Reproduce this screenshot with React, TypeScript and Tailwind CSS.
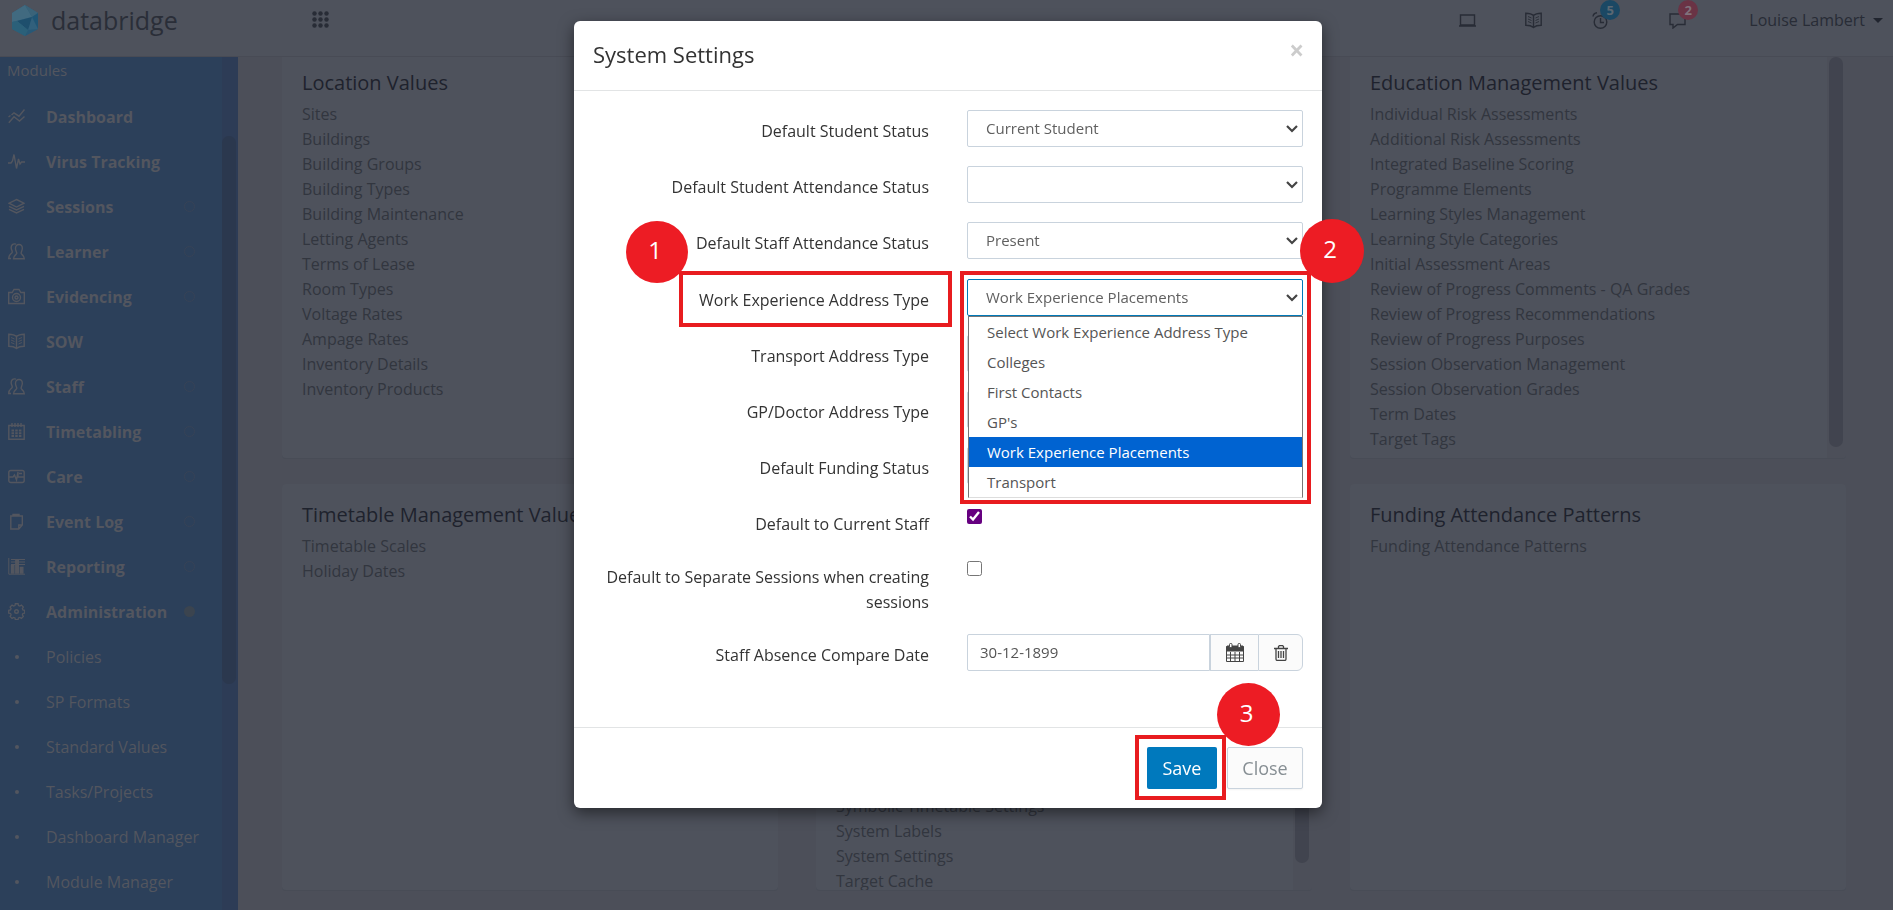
import { useState } from "react";
import type { ReactNode } from "react";

const stroke = { fill: "none", stroke: "currentColor", strokeWidth: 1.4 };

function Icon({ children, size = 17 }: { children: ReactNode; size?: number }) {
  return (
    <svg width={size} height={size} viewBox="0 0 17 17" className="shrink-0" aria-hidden="true" {...stroke}>
      {children}
    </svg>
  );
}

const icons = {
  chart: (
    <Icon>
      <path d="M.8 14.800 6 8.800l5.500 4.200L16.500 8.500M.5 9l2-1.500M3.500 7 6 4.800l5 3.400L16.500 1.500" />
    </Icon>
  ),
  pulse: (
    <Icon>
      <path d="M0 10h3l1.500-2L6 1.500 8.500 15.500 10.500 6l1.500 5 1.500-2H17" />
    </Icon>
  ),
  layers: (
    <Icon>
      <path d="M8.500 1.500 16 5.200 8.500 9 1 5.200zM1 8.300 8.500 12 16 8.300M1 11.300 8.500 15 16 11.300" />
    </Icon>
  ),
  users: (
    <Icon>
      <path d="M11 1.500c2.300 0 3.500 1.700 3.300 4.200-.2 2-1.200 3.600-1.200 4.600 0 1.200 3.200 2 3.200 5.500H5.500c0-3.500 3.300-4.300 3.300-5.500 0-1-1.200-2.600-1.300-4.600C7.400 3.200 8.700 1.500 11 1.500zM8 1.200C5 .2 3 2 3.200 5c.1 2 1.300 3 1 4.300C3.900 10.600.700 11 .7 15.500H3" />
    </Icon>
  ),
  camera: (
    <Icon>
      <path d="M.7 4.500h3.500l1.800-3h5l1.800 3h3.500v11H.7z" />
      <circle cx="8.500" cy="9.500" r="4" />
      <circle cx="8.500" cy="9.500" r="1.500" />
    </Icon>
  ),
  book: (
    <Icon>
      <path d="M8.500 3.500C6.500 1.500 3.500 1.200.8 1.200v12c3 0 5.700.5 7.700 2.300 2-1.800 4.700-2.300 7.700-2.300v-12c-2.700 0-5.700.3-7.700 2.300zv12" />
      <path d="M3 4.500l3.500 1.500M3 7l3.500 1.500M3 9.500 6.500 11M14 4.500 10.500 6M14 7l-3.500 1.500M14 9.500 10.500 11" strokeWidth=".9" />
    </Icon>
  ),
  calendar: (
    <Icon>
      <path d="M.8 2.500h15.400v13.700H.8zM4 0v4M7 0v4M10 0v4M13 0v4" />
      <path d="M3.500 7.500h10M3.500 10.200h10M3.500 13h10" strokeWidth="1.900" strokeDasharray="2.500 1.200" />
    </Icon>
  ),
  care: (
    <Icon>
      <rect x=".8" y="2.500" width="15.400" height="12" rx="2" />
      <path d="M1 9h4l1.500-2 2 5 1.500-8v5h6M11 5.500h3" />
    </Icon>
  ),
  clipboard: (
    <Icon>
      <path d="M2.800 3h11.500v9l-3.500 4h-8zM10.800 16v-4h3.500M5 3V1.500h6V3z" />
    </Icon>
  ),
  report: (
    <Icon>
      <path d="M.8 0v16.200H17M3 1.500h14M3 4h14M3 6.500h14" strokeWidth="1" />
      <path d="M3.500 15V7.500h2.300V15zM7.800 15V2.500h2.500V15zM12.300 15V9.500h2.500V15z" fill="currentColor" />
    </Icon>
  ),
  gear: (
    <Icon>
      <path d="M7 .8h3l.4 2 1.500.6 1.700-1.100 2.100 2.100-1.100 1.700.6 1.500 2 .4v3l-2 .4-.6 1.500 1.100 1.700-2.100 2.100-1.700-1.100-1.500.6-.4 2H7l-.4-2-1.500-.6-1.700 1.100-2.100-2.100 1.100-1.700-.6-1.500-2-.4V8l2-.4.6-1.500L1.300 4.400l2.100-2.100 1.700 1.100 1.500-.6z" transform="translate(.9 0) scale(.92)" />
      <circle cx="8.500" cy="8.500" r="1.800" />
    </Icon>
  ),
};

const modules = [
  { label: "Dashboard", icon: icons.chart, ring: false },
  { label: "Virus Tracking", icon: icons.pulse, ring: false },
  { label: "Sessions", icon: icons.layers, ring: true },
  { label: "Learner", icon: icons.users, ring: true },
  { label: "Evidencing", icon: icons.camera, ring: true },
  { label: "SOW", icon: icons.book, ring: false },
  { label: "Staff", icon: icons.users, ring: true },
  { label: "Timetabling", icon: icons.calendar, ring: true },
  { label: "Care", icon: icons.care, ring: true },
  { label: "Event Log", icon: icons.clipboard, ring: true },
  { label: "Reporting", icon: icons.report, ring: true },
];

const adminPages = ["Policies", "SP Formats", "Standard Values", "Tasks/Projects", "Dashboard Manager", "Module Manager"];

const locationValues = [
  "Sites",
  "Buildings",
  "Building Groups",
  "Building Types",
  "Building Maintenance",
  "Letting Agents",
  "Terms of Lease",
  "Room Types",
  "Voltage Rates",
  "Ampage Rates",
  "Inventory Details",
  "Inventory Products",
];

const educationValues = [
  "Individual Risk Assessments",
  "Additional Risk Assessments",
  "Integrated Baseline Scoring",
  "Programme Elements",
  "Learning Styles Management",
  "Learning Style Categories",
  "Initial Assessment Areas",
  "Review of Progress Comments - QA Grades",
  "Review of Progress Recommendations",
  "Review of Progress Purposes",
  "Session Observation Management",
  "Session Observation Grades",
  "Term Dates",
  "Target Tags",
];

const addressTypes = [
  "Select Work Experience Address Type",
  "Colleges",
  "First Contacts",
  "GP's",
  "Work Experience Placements",
  "Transport",
];

function Logo() {
  return (
    <svg width="28" height="32" viewBox="0 0 28 32" aria-hidden="true">
      <path d="M14 0 27 8v16L14 31 1 24V8z" fill="#31607c" />
      <path d="M14 0 1 8v9l20-5z" fill="#416a80" />
      <path d="M14 0 27 8l-6 4z" fill="#3a6379" />
      <path d="M27 8v16l-6-12z" fill="#1f5575" />
      <path d="M21 12 6 16l11 9z" fill="#1e4f6d" />
      <path d="M1 17l5-1 11 9-3 6L1 24z" fill="#2b6079" />
      <path d="M17 25l10-1-13 7z" fill="#275876" />
    </svg>
  );
}

function Header() {
  return (
    <header className="flex h-[57px] items-start border-b border-[#484b55] bg-[#4e525c] text-[#282c36]">
      <a href="#home" className="flex w-[312px] items-center pl-[11px] pt-1 text-[#2a2e38]">
        <Logo />
        <span className="ml-3 pb-[2px] text-[25px] leading-8">databridge</span>
      </a>
      <button aria-label="Apps" className="mt-[11px]">
        <svg width="17" height="17" viewBox="0 0 17 17" fill="currentColor">
          {[2.5, 8.5, 14.5].map((y) => [2.5, 8.5, 14.5].map((x) => <circle key={`${x}-${y}`} cx={x} cy={y} r="2.200" />))}
        </svg>
      </button>
      <div className="ml-auto mt-3 flex items-start pr-[10px]">
        <button aria-label="Screen" className="mr-[49px]">
          <Icon>
            <path d="M1.500 3h14v10h-14zM0 14h17" />
          </Icon>
        </button>
        <button aria-label="Guides" className="mr-[50px]">{icons.book}</button>
        <button aria-label="Reminders" className="relative mr-[60px]">
          <Icon>
            <circle cx="8.500" cy="10" r="6.300" />
            <path d="M8.500 6v4.500H12M1 4.500C1.300 2.500 3 1 5 .8M12.500.8c2 .2 3.300 1.700 3.500 3.700" />
          </Icon>
          <span className="absolute -top-3 left-[8px] flex size-5 items-center justify-center rounded-full bg-[#1b4864] text-[13px] leading-4 font-bold text-[#5c6873]">5</span>
        </button>
        <button aria-label="Messages" className="relative mr-[63px]">
          <Icon>
            <path d="M1 2h15v10.500H8.500L4 16v-3.500H1z" />
          </Icon>
          <span className="absolute -top-3 left-[9px] flex size-5 items-center justify-center rounded-full bg-[#6a3345] text-[13px] leading-4 font-bold text-[#80727c]">2</span>
        </button>
        <button className="-mt-1 flex items-center gap-2 text-base leading-6">
          Louise Lambert
          <span className="border-x-5 border-t-5 border-x-transparent border-t-[#20242e]" />
        </button>
      </div>
    </header>
  );
}

function Sidebar() {
  return (
    <nav className="flex w-[238px] shrink-0 overflow-hidden bg-[#2c405a] text-[#53565f]">
      <div className="min-w-0 flex-1">
        <p className="pb-[11px] pl-[7px] pt-px text-[15px] leading-[25px]">Modules</p>
        <ul>
          {modules.map((m) => (
            <li key={m.label}>
              <a href="#module" className="flex h-[45px] items-center pl-2 text-base font-bold">
                {m.icon}
                <span className="ml-[21px] w-[138px]">{m.label}</span>
                {m.ring && <span className="size-[11px] rounded-full border border-[#374357]" />}
              </a>
            </li>
          ))}
          <li>
            <a href="#admin" className="flex h-[45px] items-center pl-2 text-base font-bold">
              {icons.gear}
              <span className="ml-[21px] w-[138px]">Administration</span>
              <span className="size-[11px] rounded-full bg-[#3b444f]" />
            </a>
            <ul>
              {adminPages.map((page) => (
                <li key={page}>
                  <a href="#page" className="flex h-[45px] items-center pl-[15px] text-base whitespace-nowrap">
                    <span className="mr-[27px] size-1 rounded-full bg-[#53565f]" />
                    {page}
                  </a>
                </li>
              ))}
            </ul>
          </li>
        </ul>
      </div>
      <div className="w-4 bg-[#2d3c56] pt-[79px]">
        <div className="h-[548px] w-[14px] rounded-full bg-[#2b384e]" />
      </div>
    </nav>
  );
}

type CardProps = {
  title?: string;
  items?: string[];
  atEnd?: boolean;
  thumb?: string;
};

function Card({ title, items = [], atEnd, thumb }: CardProps) {
  return (
    <section className="flex h-[407px] overflow-hidden rounded-sm border-b border-[#484c56] bg-[#4e525c]">
      <div className={`flex flex-1 flex-col px-5 pt-[18px] whitespace-nowrap ${atEnd ? "justify-end" : ""}`}>
        {title && <h2 className="mb-[7px] text-[20px] leading-[25px] text-[#1e222d]">{title}</h2>}
        <ul className={`text-base leading-[25px] text-[#32363f] ${atEnd ? "-mb-1" : ""}`}>
          {items.map((item) => (
            <li key={item}>
              <a href="#values">{item}</a>
            </li>
          ))}
        </ul>
      </div>
      {thumb && (
        <div className="w-[19px] bg-[#4c4f59] px-[2px]">
          <div className={`w-[14px] bg-[#41444f] ${thumb}`} />
        </div>
      )}
    </section>
  );
}

function Step({ n, className }: { n: number; className: string }) {
  return (
    <span className={`absolute z-20 flex items-center justify-center rounded-full bg-[#ed1c24] pr-1 pb-1 text-2xl text-white ${className}`}>
      {n}
    </span>
  );
}

function Row({ id, label, children, className = "mb-[19px]" }: { id: string; label: string; children: ReactNode; className?: string }) {
  return (
    <div className={`grid grid-cols-2 ${className}`}>
      <label htmlFor={id} className="px-[19px] pt-[9px] text-right text-base leading-[25px] text-[#333]">
        {label}
      </label>
      <div className="relative px-[19px]">{children}</div>
    </div>
  );
}

function Select({ id, options, active }: { id: string; options: string[]; active?: boolean }) {
  return (
    <div className="relative">
      <select
        id={id}
        defaultValue={options[0]}
        className={`block h-[37px] w-full appearance-none rounded-xs border bg-white pl-[18px] text-[15px] text-[#606060] outline-none ${active ? "border-[#0079b8]" : "border-[#c9d3dd]"}`}
      >
        {options.map((o) => (
          <option key={o}>{o}</option>
        ))}
      </select>
      <svg width="12" height="8" viewBox="0 0 12 8" className="pointer-events-none absolute right-[5px] top-[15px]" fill="none" stroke="#444" strokeWidth="2.200" aria-hidden="true">
        <path d="M1 1l5 5 5-5" />
      </svg>
    </div>
  );
}

function SettingsDialog() {
  const [date, setDate] = useState("30-12-1899");
  const [current, setCurrent] = useState(true);
  const [separate, setSeparate] = useState(false);

  return (
    <div role="dialog" aria-labelledby="dialog-title" className="w-[748px] rounded-md bg-white shadow-[0_5px_15px_rgba(0,0,0,0.5)]">
      <div className="flex h-[70px] items-center justify-between border-b border-[#e2e4e5] pb-[2px] pl-[19px] pr-[18px]">
        <h1 id="dialog-title" className="text-[22px] text-[#333]">System Settings</h1>
        <button aria-label="Close dialog" className="mb-2 text-[26px] font-bold text-[#ccc]">×</button>
      </div>

      <form className="pb-[37px] pt-[19px]">
        <Row id="student-status" label="Default Student Status">
          <Select id="student-status" options={["Current Student"]} />
        </Row>
        <Row id="student-attendance" label="Default Student Attendance Status">
          <Select id="student-attendance" options={[""]} />
        </Row>
        <Row id="staff-attendance" label="Default Staff Attendance Status" className="mb-5">
          <Select id="staff-attendance" options={["Present"]} />
        </Row>

        <div className="relative">
          <Row id="work-address" label="Work Experience Address Type">
            <Select id="work-address" options={["Work Experience Placements"]} active />
            <ul role="listbox" aria-label="Work Experience Address Type" className="absolute left-5 right-[19px] top-[37px] z-10 border border-[#767676] border-b-[#ddd] bg-white text-[15px] text-[#555]">
              {addressTypes.map((type) => {
                const selected = type === "Work Experience Placements";
                return (
                  <li
                    key={type}
                    role="option"
                    aria-selected={selected}
                    className={`h-[30px] pl-[18px] leading-[30px] ${selected ? "bg-[#0063d1] text-white" : ""}`}
                  >
                    {type}
                  </li>
                );
              })}
            </ul>
          </Row>
          {/* walkthrough markers */}
          <div className="absolute -top-[8px] left-[105px] h-[56px] w-[273px] border-4 border-[#e81c1f]" />
          <div className="absolute -top-[8px] left-[386px] z-10 h-[233px] w-[351px] border-4 border-[#e81c1f]" />
          <Step n={1} className="-top-[58px] left-[52px] size-[62px]" />
          <Step n={2} className="-top-[60px] left-[726px] size-[64px]" />
        </div>

        <Row id="transport-address" label="Transport Address Type">
          <Select id="transport-address" options={[""]} />
        </Row>
        <Row id="gp-address" label="GP/Doctor Address Type">
          <Select id="gp-address" options={[""]} />
        </Row>
        <Row id="funding-status" label="Default Funding Status">
          <Select id="funding-status" options={[""]} />
        </Row>
        <Row id="current-staff" label="Default to Current Staff">
          <input
            id="current-staff"
            type="checkbox"
            checked={current}
            onChange={(e) => setCurrent(e.target.checked)}
            className="mt-[6px] block size-[15px] accent-[#660080]"
          />
        </Row>
        <Row id="separate-sessions" label="Default to Separate Sessions when creating sessions">
          <input
            id="separate-sessions"
            type="checkbox"
            checked={separate}
            onChange={(e) => setSeparate(e.target.checked)}
            className="mt-[5px] block size-[15px]"
          />
        </Row>
        <Row id="compare-date" label="Staff Absence Compare Date">
          <div className="flex h-[37px] text-[#555]">
            <input
              id="compare-date"
              type="text"
              value={date}
              onChange={(e) => setDate(e.target.value)}
              className="w-[243px] rounded-l-xs border border-[#c9d3dd] px-3 text-[15px] outline-none"
            />
            <button type="button" aria-label="Pick date" className="flex w-[48px] items-center justify-center border-y border-l border-[#c9d3dd] bg-[#fbfbfb]">
              <svg width="18" height="20" viewBox="0 0 18 20" fill="none" stroke="#444" aria-hidden="true">
                <path d="M.5 3.500h17v15H.5zM.5 12h17M.5 15h17M4.500 9v9M9 9v9M13.500 9v9" />
                <path d="M1 3h16v5H1z" fill="#444" />
                <rect x="3.500" y=".5" width="2.500" height="4" rx="1" fill="#fff" />
                <rect x="12" y=".5" width="2.500" height="4" rx="1" fill="#fff" />
              </svg>
            </button>
            <button type="button" aria-label="Clear date" className="flex flex-1 items-center justify-center rounded-r-md border border-[#c9d3dd] bg-[#fbfbfb]">
              <svg width="14" height="16" viewBox="0 0 14 16" fill="none" stroke="#444" aria-hidden="true">
                <path d="M0 3.500h14M4.500 3.500v-2l1-1h3l1 1v2M2 3.500v10.500q0 1.500 1.500 1.500h7q1.500 0 1.500-1.500V3.500M4.500 6v7M7 6v7M9.500 6v7" strokeWidth="1.300" />
              </svg>
            </button>
          </div>
        </Row>
      </form>

      <div className="relative flex justify-end gap-[10px] border-t border-[#e2e4e5] p-[19px]">
        <button className="h-[42px] w-[70px] rounded-xs bg-[#0079bd] text-lg text-white">Save</button>
        <button className="h-[42px] w-[76px] rounded-xs border border-[#c9d3dd] bg-[#fbfbfb] text-lg text-[#868e93] shadow-xs">Close</button>
        <div className="absolute right-[96px] top-[7px] h-[65px] w-[91px] border-4 border-[#e81c1f]" />
        <Step n={3} className="-top-[45px] right-[42px] size-[63px]" />
      </div>
    </div>
  );
}

export default function App() {
  return (
    <div className="flex h-screen flex-col overflow-hidden bg-[#4c4f59] font-['Open_Sans',sans-serif]">
      <Header />
      <div className="flex min-h-0 flex-1">
        <Sidebar />
        <main className="min-w-0 flex-1 overflow-hidden pl-11 pr-[47px]">
          <div className="-mt-[5px] grid grid-cols-3 gap-x-[38px] gap-y-[25px]">
            <Card title="Location Values" items={locationValues} />
            <Card />
            <Card title="Education Management Values" items={educationValues} thumb="mt-[5px] h-[390px] rounded-full" />
            <Card title="Timetable Management Values" items={["Timetable Scales", "Holiday Dates"]} />
            <Card
              atEnd
              items={["Symbolic Timetable Settings", "System Labels", "System Settings", "Target Cache"]}
              thumb="mt-[200px] h-[179px] rounded-full"
            />
            <Card title="Funding Attendance Patterns" items={["Funding Attendance Patterns"]} />
          </div>
        </main>
      </div>
      <div className="fixed inset-0 flex items-start justify-center pl-[3px] pt-[21px]">
        <SettingsDialog />
      </div>
    </div>
  );
}
